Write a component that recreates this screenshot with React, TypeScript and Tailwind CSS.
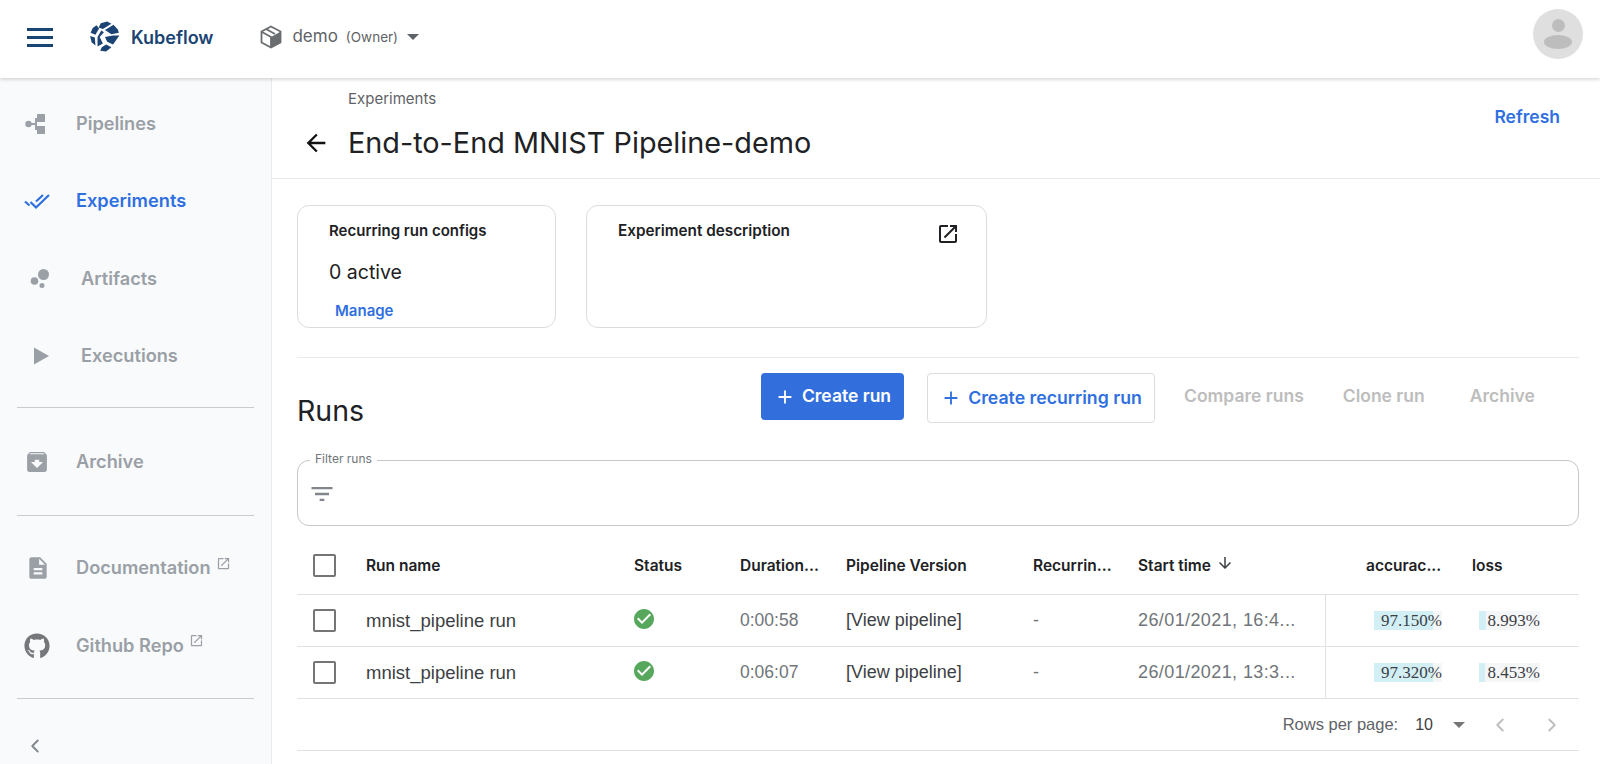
import React from 'react'
import { ChevronLeft, ChevronRight } from 'lucide-react'
import { FaGithub } from 'react-icons/fa'

const Mi = ({ d, className }: { d: string; className?: string }) => (
  <svg viewBox="0 0 24 24" fill="currentColor" className={className}>
    <path d={d} />
  </svg>
)

const ICONS = {
  archive:
    'M20.54 5.23l-1.39-1.68C18.88 3.21 18.47 3 18 3H6c-.47 0-.88.21-1.16.55L3.46 5.23C3.17 5.57 3 6.02 3 6.5V19c0 1.1.9 2 2 2h14c1.1 0 2-.9 2-2V6.5c0-.48-.17-.93-.46-1.27zM12 17.5L6.5 12H10v-2h4v2h3.5L12 17.5zM5.12 5l.81-1h12l.94 1H5.12z',
  doc: 'M14 2H6c-1.1 0-1.99.9-1.99 2L4 20c0 1.1.89 2 1.99 2H18c1.1 0 2-.9 2-2V8l-6-6zm2 16H8v-2h8v2zm0-4H8v-2h8v2zm-3-5V3.5L18.5 9H13z',
  open: 'M19 19H5V5h7V3H5c-1.11 0-2 .9-2 2v14c0 1.1.89 2 2 2h14c1.1 0 2-.9 2-2v-7h-2v7zM14 3v2h3.59l-9.83 9.83 1.41 1.41L19 6.41V10h2V3h-7z',
  check:
    'M12 2C6.48 2 2 6.48 2 12s4.48 10 10 10 10-4.48 10-10S17.52 2 12 2zm-2 15l-5-5 1.41-1.41L10 14.17l7.59-7.59L19 8l-9 9z',
  filter: 'M10 18h4v-2h-4v2zM3 6v2h18V6H3zm3 7h12v-2H6v2z',
  back: 'M20 11H7.83l5.59-5.59L12 4l-8 8 8 8 1.41-1.41L7.83 13H20v-2z',
  down: 'M20 12l-1.41-1.41L13 16.17V4h-2v12.17l-5.58-5.59L4 12l8 8 8-8z',
  add: 'M19 13h-6v6h-2v-6H5v-2h6V5h2v6h6v2z',
}

const KubeflowLogo = () => (
  <svg viewBox="0 0 30 30" fill="#1b4475" className="w-[32px] h-[32px]">
    <polygon points="11,2 17,0.5 21,2.5 13,7.5 9,6" />
    <polygon points="7,4 9.5,7 6,13 1.5,11 3.5,6.5" />
    <polygon points="23,3.5 27,8 28,11 21,12.5 15,8.5" />
    <polygon points="1,14 5.5,15.5 6,23 2.5,20" />
    <polygon points="11.5,9 14,10.5 10,15 13,21 8,24 8,15" />
    <polygon points="15,15 22.5,13.5 28.5,13.5 22.5,22 17,19.5" />
    <polygon points="12,24.5 16,22 21,24.5 16,28.5 10.5,28" />
  </svg>
)

const PipelinesIcon = () => (
  <svg viewBox="0 0 24 24" fill="#9aa0a6" className="w-6 h-6">
    <circle cx="4.500" cy="12" r="3.200" />
    <rect x="7" y="11" width="6" height="2" />
    <rect x="11" y="6" width="2" height="12" />
    <rect x="13" y="2" width="8" height="8" rx="0.5" />
    <rect x="13" y="14" width="8" height="8" rx="0.5" />
  </svg>
)

const ExperimentsIcon = () => (
  <svg viewBox="0 0 26 18" fill="none" stroke="#2f6fdf" strokeWidth="2.200" className="w-[26px] h-[18px]">
    <path d="M1 9.500l4.500 4" />
    <path d="M6.500 10l5.500 5.500L25 3" />
    <path d="M12 9.500L19 3" />
  </svg>
)

const NavItem = ({
  icon,
  label,
  active,
  external,
  iconBox = 'w-[76px] pl-6',
  height,
}: {
  icon: React.ReactNode
  label: string
  active?: boolean
  external?: boolean
  iconBox?: string
  height: string
}) => (
  <div className={`flex items-center ${height}`}>
    <div className={`${iconBox} flex items-center shrink-0`}>{icon}</div>
    <span className={`text-[18.200px] font-semibold ${active ? 'text-[#2f6fdf]' : 'text-[#9aa0a6]'}`}>{label}</span>
    {external && <Mi d={ICONS.open} className="w-[15px] h-[15px] ml-[5px] mb-[10px] text-[#9aa0a6]" />}
  </div>
)

const Divider = () => <div className="mx-[17px] h-px bg-[#c9cbcf]" />

const Sidebar = () => (
  <aside className="w-[272px] shrink-0 bg-[#f8fafc] border-r border-[#e8eaed] flex flex-col pt-[8px]">
    <NavItem height="h-[76px]" icon={<PipelinesIcon />} label="Pipelines" />
    <NavItem height="h-[77px]" icon={<ExperimentsIcon />} label="Experiments" active />
    <NavItem
      height="h-[80px]"
      iconBox="w-[81px] pl-[29px]"
      icon={
        <svg viewBox="0 0 24 24" fill="#9aa0a6" className="w-6 h-6">
          <circle cx="14.5" cy="7.5" r="5.5" />
          <circle cx="5.5" cy="14" r="3.8" />
          <circle cx="13" cy="18.5" r="2.5" />
        </svg>
      }
      label="Artifacts"
    />
    <NavItem
      height="h-[74px]"
      iconBox="w-[81px] pl-[29px]"
      icon={
        <svg viewBox="0 0 24 24" fill="#9aa0a6" className="w-6 h-6">
          <path d="M5 3.5v17L20 12z" />
        </svg>
      }
      label="Executions"
    />
    <div className="mt-[14px]">
      <Divider />
    </div>
    <NavItem height="h-[107px]" iconBox="w-[76px] pl-[25px]" icon={<Mi d={ICONS.archive} className="w-[24px] h-[24px] text-[#9aa0a6] scale-110" />} label="Archive" />
    <Divider />
    <NavItem height="h-[104px]" iconBox="w-[76px] pl-[25px]" icon={<Mi d={ICONS.doc} className="w-[26px] h-[26px] text-[#9aa0a6]" />} label="Documentation" external />
    <NavItem height="h-[51px]" iconBox="w-[76px] pl-[24px]" icon={<FaGithub className="w-[26px] h-[26px] text-[#75777a]" />} label="Github Repo" external />
    <div className="mt-[27px]">
      <Divider />
    </div>
    <div className="pl-[24px] pt-[36px]">
      <ChevronLeft className="w-[22px] h-[22px] text-[#80868b]" strokeWidth={2} />
    </div>
  </aside>
)

const Topbar = () => (
  <header className="relative z-10 h-[78px] shrink-0 bg-white shadow-[0_1px_4px_rgba(0,0,0,0.2)] flex items-center pl-[27px] pr-[17px] pb-[4px]">
    <div className="w-[26px] flex flex-col gap-[5px]">
      <div className="h-[3px] bg-[#1b4475]" />
      <div className="h-[3px] bg-[#1b4475]" />
      <div className="h-[3px] bg-[#1b4475]" />
    </div>
    <div className="ml-[36px]">
      <KubeflowLogo />
    </div>
    <span className="ml-[10px] text-[18px] font-semibold text-[#1b4475]">Kubeflow</span>
    <svg viewBox="0 0 24 24" className="ml-[46px] w-[24px] h-[24px]" fill="#6a6d70">
      <path d="M12 1.5l9.5 5v11L12 22.5l-9.500-5v-11z" fill="none" stroke="#6a6d70" strokeWidth="1.800" />
      <path d="M12 12l9-5v10.500l-9 4.500z" />
      <path d="M3 7l9 5v10" fill="none" stroke="#6a6d70" strokeWidth="1.800" />
      <path d="M7 4l9 5" fill="none" stroke="#6a6d70" strokeWidth="1.800" />
    </svg>
    <span className="ml-[9px] text-[17px] text-[#5f6368]">demo</span>
    <span className="ml-[8px] text-[13.500px] text-[#5f6368]">(Owner)</span>
    <div className="ml-[9px] w-0 h-0 border-x-[6px] border-x-transparent border-t-[6px] border-t-[#5f6368]" />
    <div className="ml-auto mb-[6px] w-[50px] h-[50px] rounded-full bg-[#dfdfdf] flex flex-col items-center justify-center gap-[3px]">
      <div className="w-[13px] h-[13px] rounded-full bg-[#bdbdbd]" />
      <div className="w-[28px] h-[14px] rounded-[50%] bg-[#bdbdbd]" />
    </div>
  </header>
)

const Card = ({ className, children }: { className: string; children: React.ReactNode }) => (
  <div className={`h-[123px] rounded-[12px] border border-[#dadce0] ${className}`}>{children}</div>
)

const Cols = [
  'w-[69px]',
  'w-[268px]',
  'w-[106px]',
  'w-[106px]',
  'w-[187px]',
  'w-[105px]',
  'w-[187px]',
]

const Metric = ({ value, w, barWidth, bg }: { value: string; w: string; barWidth: string; bg: string }) => (
  <div className={`relative h-[19px] ${w} ${bg} font-['Liberation_Serif',serif] text-[17px] leading-[19px] text-[#3c4043] text-right`}>
    <div className={`absolute left-0 top-0 h-full ${barWidth} bg-[#d2eff6]`} />
    <span className="relative">{value}</span>
  </div>
)

const Row = ({ duration, start, acc, accBar, loss, lossBar }: { duration: string; start: string; acc: string; accBar: string; loss: string; lossBar: string }) => (
  <div className="flex items-center h-[52px] border-b border-[#dfe1e3] font-['Liberation_Sans',sans-serif] text-[18px]">
    <div className={`${Cols[0]} shrink-0 pl-[16px]`}>
      <div className="w-[23px] h-[23px] rounded-[2px] border-2 border-[#757575]" />
    </div>
    <div className={`${Cols[1]} shrink-0 text-[18.500px] text-[#3c4043]`}>mnist_pipeline run</div>
    <div className={`${Cols[2]} shrink-0`}>
      <Mi d={ICONS.check} className="w-[24px] h-[24px] -ml-[2px] -mt-[4px] text-[#57a85c]" />
    </div>
    <div className={`${Cols[3]} shrink-0 text-[17.500px] text-[#70757a]`}>{duration}</div>
    <div className={`${Cols[4]} shrink-0 text-[#3c4043]`}>[View pipeline]</div>
    <div className={`${Cols[5]} shrink-0 text-[#70757a]`}>-</div>
    <div className={`${Cols[6]} shrink-0 text-[#70757a] tracking-[0.4px]`}>{start}</div>
    <div className="h-full w-[49px] shrink-0 border-l border-[#dfe1e3]" />
    <div className="w-[105px] shrink-0">
      <Metric value={acc} w="w-[68px]" barWidth={accBar} bg="bg-[#f5f6f8]" />
    </div>
    <Metric value={loss} w="w-[61px]" barWidth={lossBar} bg="bg-[#f5f6f8]" />
  </div>
)

const HeadCell = ({ w, children }: { w: string; children: React.ReactNode }) => (
  <div className={`${w} shrink-0 text-[15.500px] font-semibold text-[#202124]`}>{children}</div>
)

const Main = () => (
  <main className="flex-1 min-w-0 bg-white overflow-hidden">
    <div className="h-[101px] border-b border-[#e8eaed] flex justify-between pr-[40px]">
      <div className="pl-[30px] pt-[12px]">
        <div className="pl-[46px] text-[15px] leading-[18px] text-[#5f6368]">Experiments</div>
        <div className="flex items-center mt-[15px]">
          <Mi d={ICONS.back} className="w-[28px] h-[28px] text-[#111]" />
          <h1 className="ml-[18px] text-[28.800px] leading-[40px] text-[#202124]">End-to-End MNIST Pipeline-demo</h1>
        </div>
      </div>
      <div className="pt-[26px] text-[17.500px] font-semibold text-[#2f6fdf]">Refresh</div>
    </div>

    <div className="px-[25px] pr-[21px]">
      <div className="flex gap-[30px] pt-[26px] pb-[29px] border-b border-[#e8eaed]">
        <Card className="w-[259px] pl-[31px] pt-[16px]">
          <div className="text-[15px] leading-[18px] font-semibold text-[#202124]">Recurring run configs</div>
          <div className="mt-[20px] text-[19.500px] leading-[24px] text-[#202124]">0 active</div>
          <div className="mt-[18px] pl-[6px] text-[15px] leading-[18px] font-semibold text-[#2f6fdf]">Manage</div>
        </Card>
        <Card className="w-[401px] pl-[31px] pr-[26px] pt-[16px] flex justify-between items-start">
          <div className="text-[15.300px] leading-[18px] font-semibold text-[#202124]">Experiment description</div>
          <Mi d={ICONS.open} className="w-[24px] h-[24px] text-[#202124]" />
        </Card>
      </div>

      <div className="flex h-[102px] pt-[15px]">
        <div className="w-[464px] pt-[18px] text-[28.500px] leading-[40px] text-[#202124]">Runs</div>
        <div className="h-[47px] w-[143px] rounded-[4px] bg-[#326fdd] text-white flex items-center justify-center gap-[6px] text-[17.500px] font-semibold">
          <Mi d={ICONS.add} className="w-[22px] h-[22px]" />
          Create run
        </div>
        <div className="ml-[23px] h-[50px] w-[228px] rounded-[4px] border border-[#dadce0] text-[#2f6fdf] flex items-center justify-center gap-[6px] text-[17.700px] font-semibold">
          <Mi d={ICONS.add} className="w-[22px] h-[22px]" />
          Create recurring run
        </div>
        <div className="flex h-[47px] items-center text-[17.500px] font-semibold text-[#bdbdbd]">
          <span className="ml-[29px]">Compare runs</span>
          <span className="ml-[39px]">Clone run</span>
          <span className="ml-[45px]">Archive</span>
        </div>
      </div>

      <div className="relative h-[66px] rounded-[12px] border border-[#c4c6c9] flex items-center pl-[10px]">
        <span className="absolute left-[12px] -top-[10px] bg-white px-[5px] text-[12px] leading-[16px] text-[#70757a]">Filter runs</span>
        <Mi d={ICONS.filter} className="w-[28px] h-[28px] mt-[1px] text-[#80868b]" />
      </div>

      <div className="flex items-center h-[69px] pt-[11px] border-b border-[#dfe1e3]">
        <div className={`${Cols[0]} shrink-0 pl-[16px]`}>
          <div className="w-[23px] h-[23px] rounded-[2px] border-2 border-[#757575]" />
        </div>
        <HeadCell w={Cols[1]}>Run name</HeadCell>
        <HeadCell w={Cols[2]}>Status</HeadCell>
        <HeadCell w={Cols[3]}>Duration...</HeadCell>
        <HeadCell w={Cols[4]}>Pipeline Version</HeadCell>
        <HeadCell w={Cols[5]}>Recurrin...</HeadCell>
        <HeadCell w="w-[228px]">
          <span className="flex items-center gap-[5px]">
            Start time
            <Mi d={ICONS.down} className="w-[18px] h-[18px] mb-[5px] text-[#3c4043]" />
          </span>
        </HeadCell>
        <HeadCell w="w-[106px]">accurac...</HeadCell>
        <HeadCell w="w-[107px]">loss</HeadCell>
      </div>
      <Row duration="0:00:58" start="26/01/2021, 16:4..." acc="97.150%" accBar="w-[59px]" loss="8.993%" lossBar="w-[7px]" />
      <Row duration="0:06:07" start="26/01/2021, 13:3..." acc="97.320%" accBar="w-[59px]" loss="8.453%" lossBar="w-[6px]" />

      <div className="h-[52px] border-b border-[#dfe1e3] flex items-center justify-end pr-[16px] font-['Liberation_Sans',sans-serif]">
        <span className="text-[16.500px] text-[#5f6368]">Rows per page:</span>
        <span className="ml-[17px] text-[16px] text-[#3c4043]">10</span>
        <div className="ml-[20px] w-0 h-0 border-x-[6px] border-x-transparent border-t-[6px] border-t-[#757575]" />
        <ChevronLeft className="ml-[24px] w-[22px] h-[22px] text-[#bdbdbd]" strokeWidth={2} />
        <ChevronRight className="ml-[30px] w-[22px] h-[22px] text-[#bdbdbd]" strokeWidth={2} />
      </div>
    </div>
  </main>
)

const App: React.FC = () => (
  <div className="w-screen h-screen overflow-hidden flex flex-col bg-white font-['Inter',sans-serif]">
    <Topbar />
    <div className="flex flex-1 min-h-0">
      <Sidebar />
      <Main />
    </div>
  </div>
)

export default App
